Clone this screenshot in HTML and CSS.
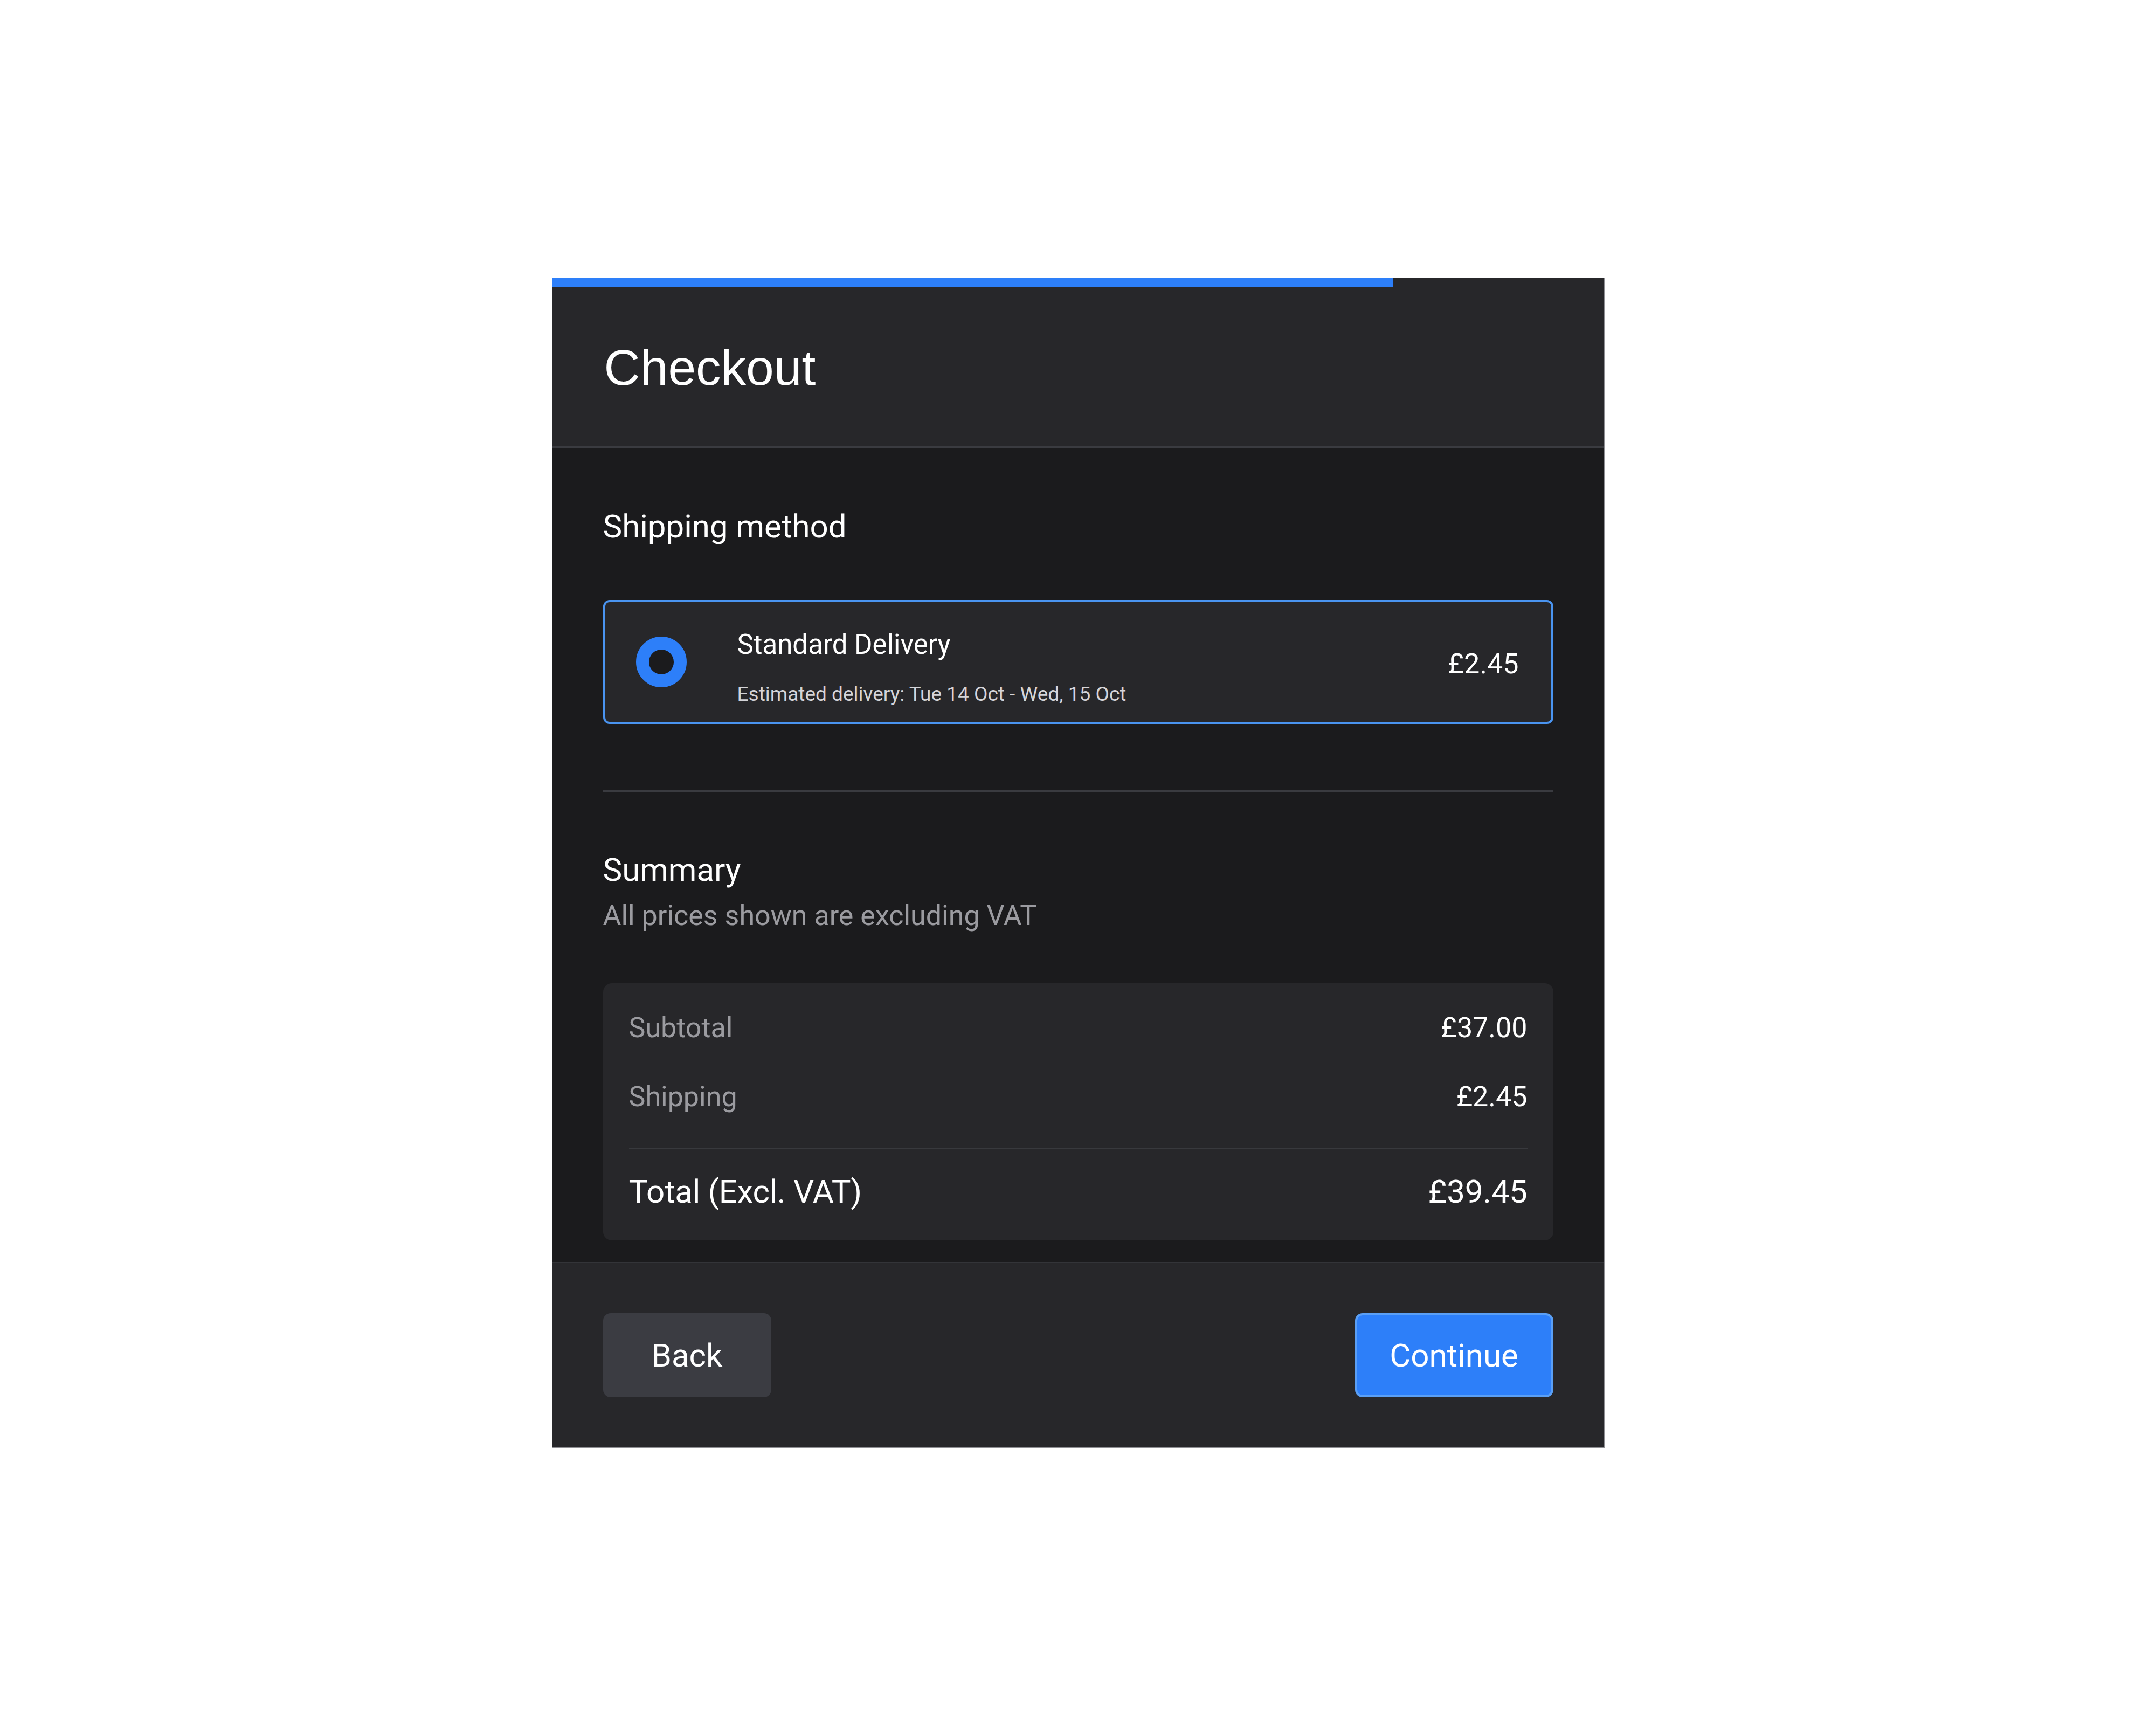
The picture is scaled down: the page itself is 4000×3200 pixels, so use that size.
FILE: index.html
```html
<!DOCTYPE html>
<html lang="en">
<head>
  <meta charset="utf-8">
  <meta name="viewport" content="width=device-width, initial-scale=1">
  <title>Checkout</title>
  <link rel="stylesheet" href="styles.css">
</head>
<body>
  <div class="checkout">
    <div class="progress"><div class="progress-fill" style="width: 80%"></div></div>
    <header class="checkout-header">
      <h1>Checkout</h1>
    </header>
    <main class="checkout-body">
      <h2>Shipping method</h2>
      <label class="option selected">
        <span class="radio"></span>
        <span class="option-text">
          <span class="option-name">Standard Delivery</span>
          <span class="option-eta">Estimated delivery: Tue 14 Oct - Wed, 15 Oct</span>
        </span>
        <span class="option-price">£2.45</span>
      </label>
      <hr class="divider">
      <h2>Summary</h2>
      <p class="note">All prices shown are excluding VAT</p>
      <div class="summary">
        <div class="line">
          <span class="label">Subtotal</span>
          <span class="value">£37.00</span>
        </div>
        <div class="line">
          <span class="label">Shipping</span>
          <span class="value">£2.45</span>
        </div>
        <div class="line total">
          <span>Total (Excl. VAT)</span>
          <span>£39.45</span>
        </div>
      </div>
    </main>
    <footer class="checkout-footer">
      <button class="btn btn-back">Back</button>
      <button class="btn btn-primary">Continue</button>
    </footer>
  </div>
</body>
</html>
```
FILE: styles.css
```css
body {
  margin: 0;
  background: #fff;
  font-family: Roboto, "Noto Sans", sans-serif;
  color: #f4f4f5;
}
.checkout {
  width: 1953px;
  box-sizing: border-box;
  margin: 515px auto 0;
  border: 1px solid #8e8e93;
  background: #27272a;
}
.progress {
  height: 16px;
}
.progress-fill {
  height: 100%;
  background: #2d7ff9;
}
.checkout-header {
  padding: 95px 96px 90px;
  border-bottom: 4px solid #3a3b40;
}
h1 {
  margin: 0;
  font-family: "Liberation Sans", Arial, sans-serif;
  font-weight: normal;
  font-size: 93px;
  line-height: 110px;
  color: #fff;
}
.checkout-body {
  display: flex;
  flex-direction: column;
  padding: 110px 94px 40px;
  background: #1b1b1d;
}
h2 {
  margin: 0;
  font-weight: normal;
  font-size: 60px;
  line-height: 72px;
  color: #fff;
}
.option {
  display: flex;
  align-items: center;
  box-sizing: border-box;
  height: 230px;
  margin-top: 100px;
  padding: 0 60px 0 57px;
  border: 4px solid #4a94f0;
  border-radius: 12px;
  background: #27272a;
}
.radio {
  flex: none;
  width: 94px;
  height: 94px;
  box-sizing: border-box;
  border: 24px solid #2d7ff9;
  border-radius: 50%;
  background: #1b1b1d;
  margin-right: 94px;
}
.option-text {
  display: flex;
  flex-direction: column;
  gap: 40px;
  margin-top: 19px;
}
.option-name {
  font-size: 51px;
  line-height: 60px;
  color: #fff;
}
.option-eta {
  font-size: 37px;
  line-height: 44px;
  color: #d4d4d8;
}
.option-price {
  margin-left: auto;
  margin-top: 8px;
  font-size: 52px;
  line-height: 62px;
  color: #fff;
}
.divider {
  margin: 122px 0 109px;
  border: 0;
  height: 4px;
  background: #3a3b40;
}
.note {
  margin: 18px 0 0;
  font-size: 52px;
  line-height: 62px;
  color: #9b9ba0;
}
.summary {
  margin-top: 94px;
  padding: 19px 48px 22px;
  border-radius: 16px;
  background: #27272a;
}
.line {
  display: flex;
  justify-content: space-between;
  padding: 32px 0;
  font-size: 52px;
  line-height: 64px;
}
.line .label {
  color: #9b9ba0;
}
.line .value {
  color: #fff;
}
.line.total {
  margin-top: 30px;
  padding: 44px 0 32px;
  border-top: 2px solid #38393d;
  font-size: 60px;
  line-height: 72px;
  letter-spacing: -0.3px;
  color: #fff;
}
.checkout-footer {
  display: flex;
  justify-content: space-between;
  padding: 93px 94px;
  border-top: 2px solid #333438;
  background: #27272a;
}
.btn {
  height: 156px;
  box-sizing: border-box;
  border-radius: 14px;
  font-family: Roboto, "Noto Sans", sans-serif;
  font-size: 60px;
  color: #fff;
  cursor: pointer;
}
.btn-back {
  width: 312px;
  border: 0;
  background: #3b3c42;
}
.btn-primary {
  width: 368px;
  border: 4px solid #5a9ff5;
  background: #2d7ff9;
}
```
